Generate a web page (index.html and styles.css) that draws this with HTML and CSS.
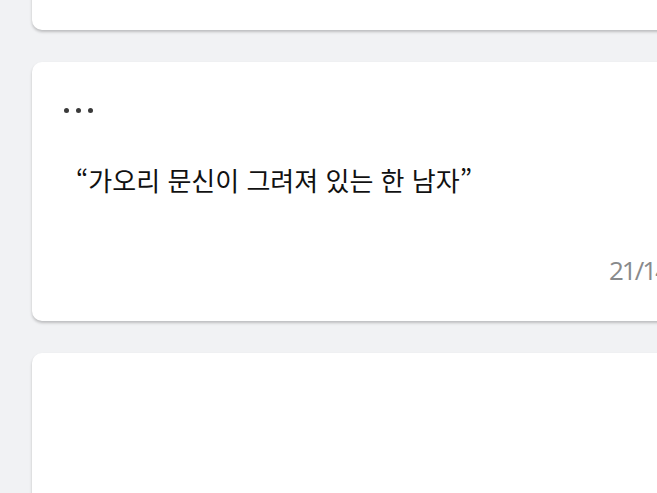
FILE: index.html
```html
<!DOCTYPE html>
<html lang="ko">
<head>
  <meta charset="UTF-8">
  <title>Captions</title>
  <link rel="stylesheet" href="styles.css">
</head>
<body>

  <div class="card-list">
    <div class="caption-card"></div>

    <div class="caption-card">
      <div class="more-dots">
        <span></span><span></span><span></span>
      </div>
      <p class="caption-text">“가오리 문신이 그려져 있는 한 남자”</p>
      <div class="char-count">21/140</div>
    </div>

    <div class="caption-card"></div>
  </div>

</body>
</html>
```

FILE: styles.css
```css
* {
  box-sizing: border-box;
}

html, body {
  overflow: hidden;
}

body {
  margin: 0;
  padding: 0 0 0 32px;
  background: #f1f2f4;
  font-family: 'Noto Sans CJK KR', 'Noto Sans', sans-serif;
  height: 493px;
}

.card-list {
  display: flex;
  flex-direction: column;
  gap: 32px;
  margin-top: -229px;
  width: 660px;
}

.caption-card {
  background: #ffffff;
  border-radius: 10px;
  height: 259px;
  padding: 42px 32px 0 32px;
  box-shadow: 0 2px 3px rgba(0, 0, 0, 0.22);
  display: flex;
  flex-direction: column;
}

.more-dots {
  display: flex;
  gap: 7px;
  height: 12px;
  align-items: center;
}

.more-dots span {
  width: 5px;
  height: 5px;
  border-radius: 50%;
  background: #3a3a3a;
}

.caption-text {
  margin: 46px 0 0 12px;
  font-size: 26px;
  line-height: 36px;
  color: #111;
}

.char-count {
  margin-top: auto;
  margin-bottom: 33px;
  padding-left: 545px;
  font-family: 'Open Sans', sans-serif;
  font-size: 26px;
  line-height: 36px;
  letter-spacing: -2px;
  color: #888a8c;
  white-space: nowrap;
}
```
